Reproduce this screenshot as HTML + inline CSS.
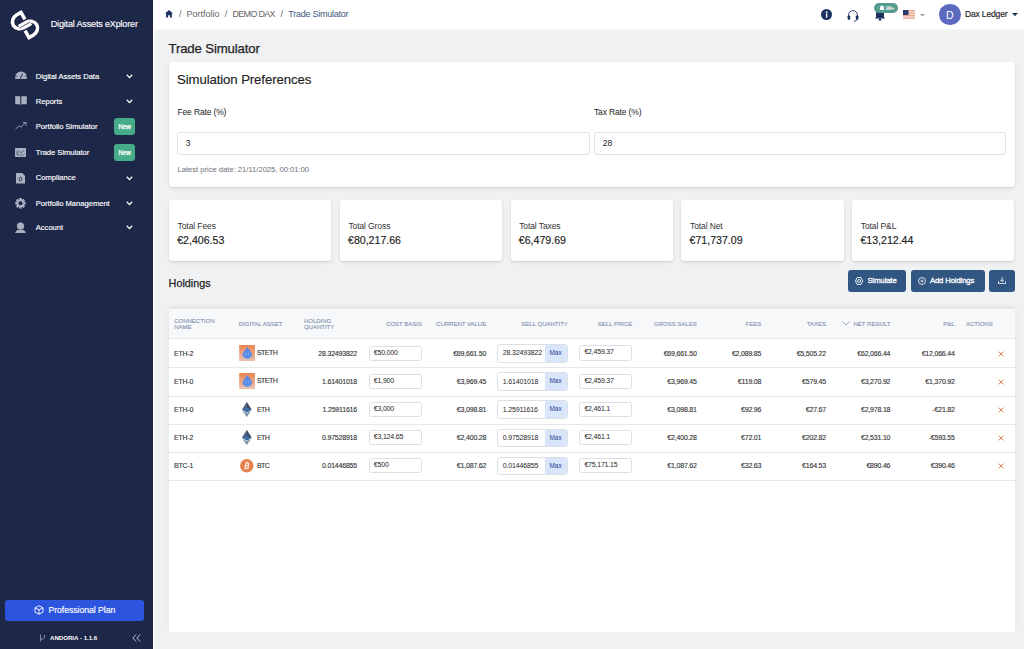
<!DOCTYPE html>
<html><head><meta charset="utf-8">
<style>
*{box-sizing:border-box;margin:0;padding:0}
html,body{width:1024px;height:649px;overflow:hidden}
body{font-family:"Liberation Sans",sans-serif;background:#f0f1f3;position:relative;color:#222}
.abs{position:absolute}
#side{position:absolute;left:0;top:0;width:153px;height:649px;background:#1d2747}
#sidestrip{position:absolute;left:153px;top:0;width:1.5px;height:649px;background:#fbfbfc}
#hdr{position:absolute;left:154px;top:0;width:870px;height:30px;background:#fff;border-bottom:1px solid #f8f8f9}
.nav{position:absolute;left:0;width:153px;height:20px;color:#fff;font-size:7.6px}
.nav .t{position:absolute;left:35.8px;top:0;white-space:nowrap;letter-spacing:-0.02px;-webkit-text-stroke:0.15px #fff}
.nav .ic{position:absolute;left:15px;top:3px;width:12px;height:10px}
.nav .chev{position:absolute;left:125.5px;top:2.4px;width:7px;height:5px}
.nav .badge{position:absolute;left:114.1px;top:-3.9px;width:21px;height:17px;background:#46ab88;border-radius:3px;color:#fff;font-size:6.3px;text-align:center;line-height:17px;-webkit-text-stroke:0.25px #fff;letter-spacing:-0.1px}
.card{position:absolute;background:#fff;border-radius:3px;box-shadow:0 1px 2px rgba(0,0,0,0.10),0 2px 5px rgba(0,0,0,0.05)}
.inp{position:absolute;background:#fff;border:1px solid #e0e2e6;border-radius:3px}
.stat .l{position:absolute;left:8.6px;top:20.6px;font-size:8.5px;color:#333;white-space:nowrap;letter-spacing:-0.1px}
.stat .v{position:absolute;left:8.2px;top:34.1px;font-size:10.6px;color:#222;white-space:nowrap;-webkit-text-stroke:0.15px #222}
.btn{position:absolute;background:#315681;border-radius:3px;color:#fff;font-weight:bold;font-size:7.4px;top:270px;height:22px}
.th{position:absolute;font-size:6px;color:#7f90ac;white-space:nowrap;line-height:6.2px;-webkit-text-stroke:0.1px #7f90ac}
.row{position:absolute;left:169px;width:846px;height:28.2px;border-bottom:1px solid #e6e8eb}
.c{position:absolute;font-size:7px;color:#333;white-space:nowrap;letter-spacing:-0.2px;-webkit-text-stroke:0.12px #333}
.r{text-align:right}
.ti{position:absolute;border:1px solid #dcdfe4;border-radius:2.5px;background:#fff;font-size:7px;line-height:12.6px;color:#262626;letter-spacing:-0.2px;white-space:nowrap}
.mx{position:absolute;border:1px solid #dcdfe4;border-radius:3px;background:#fff;font-size:7px;line-height:15.6px;overflow:hidden;color:#262626;white-space:nowrap;letter-spacing:-0.15px}
.mx .q{position:absolute;left:4px;top:0}
.mx .m{position:absolute;right:0;top:0;width:22.2px;height:16.6px;background:#d9e5fa;color:#243a96;text-align:center;font-size:6.4px;letter-spacing:0;line-height:16.2px}
.x{position:absolute;left:997px;top:11px;width:7px;height:7px}
</style></head><body>
<div id="side">
<svg class="abs" style="left:8px;top:8px" width="34" height="34" viewBox="-17 -17 34 34">
<g transform="rotate(-30)" fill="none" stroke="#fff" stroke-width="3.5">
<path d="M2.8,-5 L2.8,-12.9 L-2,-12.9 A8.3,7.35 0 0 0 -2,1.8 L6.2,1.8"/>
<path d="M-2.8,5 L-2.8,12.9 L2,12.9 A8.3,7.35 0 0 0 2,-1.8 L-6.2,-1.8"/>
<path d="M-6.5,0 L6.5,0" stroke="#1d2747" stroke-width="0.6"/>
</g></svg>
<div class="abs" style="left:50.7px;top:19.4px;color:#fff;font-size:9px;letter-spacing:-0.15px;white-space:nowrap;-webkit-text-stroke:0.15px #fff">Digital Assets eXplorer</div>
<div class="nav" style="top:71.66px"><svg class="ic" style="left:14.8px;top:-0.6px;height:8.4px;width:12.1px" viewBox="0 0 12 8.4"><path d="M0.2,8.2 L0.2,6.2 A5.8,5.8 0 0 1 11.8,6.2 L11.8,8.2 Z" fill="#a9b1c1"/><path d="M5.3,7.6 L7.6,2.6" stroke="#1d2747" stroke-width="1"/><path d="M0.6,5.2 L2.2,5.2 M9.8,5.2 L11.4,5.2" stroke="#1d2747" stroke-width="0.7"/></svg><span class="t">Digital Assets Data</span><svg class="chev" viewBox="0 0 7 5"><path d="M0.8,0.8 L3.5,3.6 L6.2,0.8" fill="none" stroke="#fff" stroke-width="1.3"/></svg></div>
<div class="nav" style="top:96.66px"><svg class="ic" style="left:14.9px;top:-0.8px;height:9.8px;width:12px" viewBox="0 0 12 9.8"><path d="M0.2,0.2 L5.2,0.2 L5.2,8.3 L0.2,8.3 Z M6.3,0.2 L11.8,0.2 L11.8,8.3 L6.3,8.3 Z" fill="#a9b1c1"/><path d="M5.2,8.3 L5.75,9.6 L6.3,8.3 Z" fill="#a9b1c1"/></svg><span class="t">Reports</span><svg class="chev" viewBox="0 0 7 5"><path d="M0.8,0.8 L3.5,3.6 L6.2,0.8" fill="none" stroke="#fff" stroke-width="1.3"/></svg></div>
<div class="nav" style="top:122.06px"><svg class="ic" style="left:14.9px;top:0.1px;height:7.5px;width:11.8px" viewBox="0 0 12 8"><path d="M0.3,7.6 L4,4 L6,5.6 L10.5,1.2" fill="none" stroke="#a9b1c1" stroke-width="0.9"/><path d="M8,0.6 L11.6,0.4 L11.4,4" fill="none" stroke="#a9b1c1" stroke-width="0.9"/></svg><span class="t">Portfolio Simulator</span><span class="badge">New</span></div>
<div class="nav" style="top:147.86px"><svg class="ic" style="left:15px;top:0.55px;height:8.9px;width:11px" viewBox="0 0 11 8.9"><rect x="0" y="0" width="11" height="8.9" rx="0.4" fill="#a9b1c1"/><path d="M2,2.5 L2,7 L9.3,7" fill="none" stroke="#4a5470" stroke-width="0.7"/><path d="M2.3,5.6 L4.2,3.3 L6,4.8 L8.8,2.6" fill="none" stroke="#4a5470" stroke-width="0.8"/></svg><span class="t">Trade Simulator</span><span class="badge">New</span></div>
<div class="nav" style="top:173.46px"><svg class="ic" style="left:15.9px;top:-0.1px;width:9.1px;height:10.5px" viewBox="0 0 9.1 10.5"><path d="M0,0 L6.3,0 L9.1,2.8 L9.1,10.5 L0,10.5 Z" fill="#a9b1c1"/><ellipse cx="4.5" cy="6" rx="1.4" ry="1.9" fill="none" stroke="#2a3350" stroke-width="0.9"/></svg><span class="t">Compliance</span><svg class="chev" viewBox="0 0 7 5"><path d="M0.8,0.8 L3.5,3.6 L6.2,0.8" fill="none" stroke="#fff" stroke-width="1.3"/></svg></div>
<div class="nav" style="top:198.56px"><svg class="ic" style="left:14.9px;top:-0.25px;width:11px;height:10.6px" viewBox="-5.5 -5.3 11 10.6"><circle r="4.1" fill="#a9b1c1"/><g fill="#a9b1c1"><rect x="-1.2" y="-5.3" width="2.4" height="10.6"/><rect x="-1.2" y="-5.3" width="2.4" height="10.6" transform="rotate(45)"/><rect x="-1.2" y="-5.3" width="2.4" height="10.6" transform="rotate(90)"/><rect x="-1.2" y="-5.3" width="2.4" height="10.6" transform="rotate(135)"/></g><circle r="2" fill="#1d2747"/></svg><span class="t">Portfolio Management</span><svg class="chev" viewBox="0 0 7 5"><path d="M0.8,0.8 L3.5,3.6 L6.2,0.8" fill="none" stroke="#fff" stroke-width="1.3"/></svg></div>
<div class="nav" style="top:223.06px"><svg class="ic" style="left:14.9px;top:-1.3px;width:11px;height:11.4px" viewBox="0 0 11 11.4"><circle cx="5.5" cy="4" r="3.6" fill="#a9b1c1"/><path d="M0,11.4 Q0.8,7.6 5.5,7.6 Q10.2,7.6 11,11.4 Z" fill="#a9b1c1"/></svg><span class="t">Account</span><svg class="chev" viewBox="0 0 7 5"><path d="M0.8,0.8 L3.5,3.6 L6.2,0.8" fill="none" stroke="#fff" stroke-width="1.3"/></svg></div>

<div class="abs" style="left:5px;top:600px;width:139px;height:21px;background:#2c54df;border-radius:3px"></div>
<svg class="abs" style="left:34px;top:605px" width="10" height="10" viewBox="0 0 10 10"><g fill="none" stroke="#fff" stroke-width="0.9"><path d="M5,0.8 L9,2.8 L9,7.2 L5,9.2 L1,7.2 L1,2.8 Z"/><path d="M1,2.8 L5,4.8 L9,2.8 M5,4.8 L5,9.2"/></g></svg>
<div class="abs" style="left:48.5px;top:605px;color:#fff;font-size:8.7px;white-space:nowrap;letter-spacing:-0.05px;-webkit-text-stroke:0.15px #fff">Professional Plan</div>
<svg class="abs" style="left:38.5px;top:634px" width="7" height="8" viewBox="0 0 7 8"><g fill="none" stroke="#8f98ab" stroke-width="0.9"><path d="M1.5,0.5 L1.5,7.5"/><path d="M5.5,1 L5.5,3 Q5.5,5 1.5,5.5"/></g></svg>
<div class="abs" style="left:50px;top:634px;color:#fff;font-size:6.1px;font-weight:bold;white-space:nowrap">ANDORIA - 1.1.6</div>
<svg class="abs" style="left:132px;top:633.5px" width="9" height="8" viewBox="0 0 9 8"><g fill="none" stroke="#cfd4de" stroke-width="0.9"><path d="M4.2,0.5 L0.8,4 L4.2,7.5"/><path d="M8.2,0.5 L4.8,4 L8.2,7.5"/></g></svg>
</div>
<div id="sidestrip"></div>
<div id="hdr"></div>
<svg class="abs" style="left:165px;top:10px" width="8" height="7.5" viewBox="0 0 8 7.5"><path d="M4,0 L8,3.6 L6.9,3.6 L6.9,7.5 L4.9,7.5 L4.9,5.2 L3.1,5.2 L3.1,7.5 L1.1,7.5 L1.1,3.6 L0,3.6 Z" fill="#1e3264"/></svg>
<div class="abs" style="left:179px;top:9px;font-size:9px;color:#666;white-space:nowrap">/</div>
<div class="abs" style="left:186.4px;top:9px;font-size:9px;color:#666;white-space:nowrap">Portfolio</div>
<div class="abs" style="left:224.8px;top:9px;font-size:9px;color:#666;white-space:nowrap">/</div>
<div class="abs" style="left:232.5px;top:9px;font-size:9px;color:#666;white-space:nowrap;letter-spacing:-0.7px">DEMO DAX</div>
<div class="abs" style="left:280.5px;top:9px;font-size:9px;color:#666;white-space:nowrap">/</div>
<div class="abs" style="left:288.3px;top:9px;font-size:9px;color:#3d5a80;white-space:nowrap;letter-spacing:-0.25px">Trade Simulator</div>

<div class="abs" style="left:821px;top:9px;width:11.3px;height:11.3px;border-radius:50%;background:#1e3264"></div>
<svg class="abs" style="left:821px;top:9px" width="11.3" height="11.3" viewBox="0 0 11.3 11.3"><circle cx="5.65" cy="3.2" r="0.85" fill="#fff"/><rect x="4.95" y="4.6" width="1.4" height="4" fill="#fff"/></svg>
<svg class="abs" style="left:847px;top:8.5px" width="12" height="13" viewBox="0 0 12 13"><path d="M1.6,8 L1.6,6 A4.4,4.4 0 0 1 10.4,6 L10.4,8" fill="none" stroke="#1e3264" stroke-width="0.9"/><rect x="0.6" y="6.5" width="2.6" height="4.2" rx="0.8" fill="#1e3264"/><rect x="8.8" y="6.5" width="2.6" height="4.2" rx="0.8" fill="#1e3264"/><path d="M10,10.5 Q9.5,12.3 7,12.3" fill="none" stroke="#1e3264" stroke-width="0.9"/></svg>
<svg class="abs" style="left:873.5px;top:9px" width="12" height="12" viewBox="0 0 12 12"><path d="M1,9.5 L2,8 L2,5 A4,4 0 0 1 10,5 L10,8 L11,9.5 Z" fill="#1e3264"/><circle cx="6" cy="10.5" r="1.3" fill="#1e3264"/></svg>
<div class="abs" style="left:874px;top:3.2px;width:24.2px;height:10px;border-radius:5px;background:#559b90"></div>
<svg class="abs" style="left:879px;top:5px" width="6" height="6.5" viewBox="0 0 6 6.5"><path d="M0.5,5 L1,4 L1,2.6 A2,2 0 0 1 5,2.6 L5,4 L5.5,5 Z" fill="#fff"/></svg>
<div class="abs" style="left:886px;top:4.6px;font-size:5px;font-weight:bold;color:#fff;white-space:nowrap">99+</div>
<svg class="abs" style="left:903px;top:10px" width="12" height="8.8" viewBox="0 0 12 8.8"><rect width="12" height="8.8" fill="#e9a489"/><g fill="#f6e3da"><rect y="1.25" width="12" height="1.25"/><rect y="3.75" width="12" height="1.25"/><rect y="6.25" width="12" height="1.25"/></g><rect width="5.5" height="5" fill="#2c3a73"/></svg>
<svg class="abs" style="left:919.5px;top:13.6px" width="5" height="2.6" viewBox="0 0 5 2.6"><path d="M0,0 L5,0 L2.5,2.6 Z" fill="#9a9ea6"/></svg>
<div class="abs" style="left:939px;top:4px;width:21.6px;height:21.4px;border-radius:50%;background:#5c6bc0"></div>
<div class="abs" style="left:946px;top:9px;font-size:10.5px;color:#fff;white-space:nowrap">D</div>
<div class="abs" style="left:965px;top:9.1px;font-size:8.6px;color:#222;white-space:nowrap;letter-spacing:-0.2px;-webkit-text-stroke:0.15px #222">Dax Ledger</div>
<svg class="abs" style="left:1012px;top:13px" width="6" height="3.2" viewBox="0 0 6 3.2"><path d="M0,0 L6,0 L3,3.2 Z" fill="#1e3264"/></svg>

<div class="abs" style="left:168.5px;top:41.3px;font-size:13.2px;color:#1f1f1f;white-space:nowrap;letter-spacing:-0.14px;-webkit-text-stroke:0.25px #1f1f1f">Trade Simulator</div>
<div class="card" style="left:169px;top:62.3px;width:846px;height:124.5px">
  <div class="abs" style="left:8px;top:9.6px;font-size:13.2px;color:#222;white-space:nowrap;letter-spacing:-0.1px;-webkit-text-stroke:0.15px #222">Simulation Preferences</div>
  <div class="abs" style="left:8.5px;top:44.8px;font-size:8.5px;color:#222;white-space:nowrap;letter-spacing:-0.15px">Fee Rate (%)</div>
  <div class="abs" style="left:425px;top:44.8px;font-size:8.5px;color:#222;white-space:nowrap;letter-spacing:-0.15px">Tax Rate (%)</div>
  <div class="inp" style="left:8px;top:69.7px;width:413px;height:22.6px"><span class="abs" style="left:7.7px;top:5px;font-size:8.5px;color:#222">3</span></div>
  <div class="inp" style="left:425px;top:69.7px;width:412px;height:22.6px"><span class="abs" style="left:7.7px;top:5px;font-size:8.5px;color:#222">28</span></div>
  <div class="abs" style="left:8.5px;top:102.6px;font-size:7.6px;color:#6b6f76;white-space:nowrap">Latest price date: 21/11/2025, 00:01:00</div>
</div>
<div class="card stat" style="left:169.0px;top:200.2px;width:162.2px;height:60.7px"><div class="l">Total Fees</div><div class="v">€2,406.53</div></div>\n<div class="card stat" style="left:339.8px;top:200.2px;width:162.2px;height:60.7px"><div class="l">Total Gross</div><div class="v">€80,217.66</div></div>\n<div class="card stat" style="left:510.6px;top:200.2px;width:162.2px;height:60.7px"><div class="l">Total Taxes</div><div class="v">€6,479.69</div></div>\n<div class="card stat" style="left:681.4px;top:200.2px;width:162.2px;height:60.7px"><div class="l">Total Net</div><div class="v">€71,737.09</div></div>\n<div class="card stat" style="left:852.2px;top:200.2px;width:162.2px;height:60.7px"><div class="l">Total P&amp;L</div><div class="v">€13,212.44</div></div>\n
<div class="abs" style="left:168.6px;top:276.6px;font-size:10.8px;color:#1f1f1f;white-space:nowrap;-webkit-text-stroke:0.25px #1f1f1f">Holdings</div>
<div class="btn" style="left:848px;width:58px"></div>
<div class="btn" style="left:911px;width:73.5px"></div>
<div class="btn" style="left:989px;width:25.7px"></div>
<svg class="abs" style="left:854.8px;top:276.8px" width="8.2" height="8" viewBox="0 0 8.2 8"><path d="M2.2,0.5 L6,0.5 L7.7,4 L6,7.5 L2.2,7.5 L0.5,4 Z" fill="none" stroke="#fff" stroke-width="0.9"/><circle cx="4.1" cy="4" r="1.5" fill="none" stroke="#fff" stroke-width="0.9"/></svg>
<div class="abs" style="left:867.6px;top:275.6px;font-size:7.7px;color:#fff;letter-spacing:-0.12px;-webkit-text-stroke:0.3px #fff;white-space:nowrap">Simulate</div>
<svg class="abs" style="left:917.5px;top:276.8px" width="8" height="8" viewBox="0 0 8 8"><circle cx="4" cy="4" r="3.5" fill="none" stroke="#fff" stroke-width="0.8"/><path d="M4,2.4 L4,5.6 M2.4,4 L5.6,4" stroke="#fff" stroke-width="0.75"/></svg>
<div class="abs" style="left:929.9px;top:275.6px;font-size:7.7px;color:#fff;letter-spacing:-0.12px;-webkit-text-stroke:0.3px #fff;white-space:nowrap">Add Holdings</div>
<svg class="abs" style="left:997.5px;top:276.8px" width="8.2" height="7.2" viewBox="0 0 8.2 7.2"><path d="M4.1,0.3 L4.1,4.4 M2.3,2.8 L4.1,4.6 L5.9,2.8" fill="none" stroke="#fff" stroke-width="0.9"/><path d="M0.5,4.2 L0.5,6.7 L7.7,6.7 L7.7,4.2" fill="none" stroke="#fff" stroke-width="0.9"/></svg>

<div class="abs" style="left:169px;top:309px;width:846px;height:322.7px;background:#fff;box-shadow:0 -2px 5px rgba(0,0,0,0.06)"></div><div class="abs" style="left:163px;top:632px;width:860px;height:17px;background:#f0f1f3"></div>
<div class="abs" style="left:169px;top:309px;width:846px;height:30px;background:#f7f8fa;border-bottom:1px solid #e3e6ea;border-radius:2px 2px 0 0"></div>
<div class="th" style="left:174.2px;top:317.7px">CONNECTION<br>NAME</div>
<div class="th" style="left:238.75px;top:320.9px">DIGITAL ASSET</div>
<div class="th" style="left:303.9px;top:317.7px">HOLDING<br>QUANTITY</div>
<div class="th" style="right:602px;text-align:right;top:320.9px">COST BASIS</div>
<div class="th" style="right:537.8px;text-align:right;top:320.9px">CURRENT VALUE</div>
<div class="th" style="right:456.20000000000005px;text-align:right;top:320.9px">SELL QUANTITY</div>
<div class="th" style="right:391.70000000000005px;text-align:right;top:320.9px">SELL PRICE</div>
<div class="th" style="right:327.29999999999995px;text-align:right;top:320.9px">GROSS SALES</div>
<div class="th" style="right:262.75px;text-align:right;top:320.9px">FEES</div>
<div class="th" style="right:198px;text-align:right;top:320.9px">TAXES</div>
<div class="th" style="right:133.70000000000005px;text-align:right;top:320.9px">NET RESULT</div>
<div class="th" style="right:69.29999999999995px;text-align:right;top:320.9px">P&amp;L</div>
<div class="th" style="left:966px;top:320.9px">ACTIONS</div>
<svg class="abs" style="left:842px;top:320.5px" width="8" height="5" viewBox="0 0 8 5"><path d="M0.6,0.6 L4,4 L7.4,0.6" fill="none" stroke="#8d9cb4" stroke-width="0.9"/></svg>
<div class="abs" style="left:169px;top:367.41px;width:846px;height:1px;background:#e6e8eb"></div>
<div class="c" style="left:174px;top:349.7px">ETH-2</div>
<svg class="abs" style="left:238.6px;top:345.1px" width="16.4" height="16" viewBox="0 0 16 16"><rect y="0" width="16" height="2.05" fill="#e88855"/><rect y="2" width="16" height="2.05" fill="#e98f61"/><rect y="4" width="16" height="2.05" fill="#e9976c"/><rect y="6" width="16" height="2.05" fill="#e99e78"/><rect y="8" width="16" height="2.05" fill="#eaa684"/><rect y="10" width="16" height="2.05" fill="#eaad90"/><rect y="12" width="16" height="2.05" fill="#eab59b"/><rect y="14" width="16" height="2.05" fill="#ebbca7"/><path d="M8.1,1.9 C9.4,4 12.8,7.3 12.8,9.7 A4.7,4.3 0 0 1 3.4,9.7 C3.4,7.3 6.8,4 8.1,1.9 Z" fill="#5a8be6"/><path d="M3.9,11.6 A4.4,2.6 0 0 0 12.3,11.6 L12,12.6 A4,1.6 0 0 1 4.2,12.6 Z" fill="#b9c9e6"/><circle cx="6.7" cy="9" r="0.5" fill="#dfe8f8"/><circle cx="9.5" cy="9" r="0.5" fill="#dfe8f8"/></svg><div class="c" style="left:257px;top:349.2px;letter-spacing:-0.55px">STETH</div>
<div class="c" style="right:667px;top:349.7px">28.32493822</div>
<div class="ti" style="left:368.5px;top:345.5px;width:53.5px;height:15.2px;padding-left:4.3px">€50,000</div>
<div class="c" style="right:537.8px;top:349.7px">€69,661.50</div>
<div class="mx" style="left:497.3px;top:344.1px;width:70.4px;height:18.6px"><span class="q" style="left:4.4px;top:0.4px">28.32493822</span><span class="m">Max</span></div>
<div class="ti" style="left:578.6px;top:345.4px;width:53.8px;height:15.2px;padding-left:4.8px;line-height:12.8px">€2,459.37</div>
<div class="c" style="right:327.29999999999995px;top:349.7px">€69,661.50</div>
<div class="c" style="right:262.75px;top:349.7px">€2,089.85</div>
<div class="c" style="right:198px;top:349.7px">€5,505.22</div>
<div class="c" style="right:133.70000000000005px;top:349.7px">€62,066.44</div>
<div class="c" style="right:69.29999999999995px;top:349.7px">€12,066.44</div>
<svg class="abs" style="left:997.9px;top:350.8px" width="6" height="6" viewBox="0 0 6 6"><path d="M0.5,0.5 L5.5,5.5 M5.5,0.5 L0.5,5.5" stroke="#e8845a" stroke-width="1"/></svg>
<div class="abs" style="left:169px;top:395.57px;width:846px;height:1px;background:#e6e8eb"></div>
<div class="c" style="left:174px;top:377.86px">ETH-0</div>
<svg class="abs" style="left:238.6px;top:373.26px" width="16.4" height="16" viewBox="0 0 16 16"><rect y="0" width="16" height="2.05" fill="#e88855"/><rect y="2" width="16" height="2.05" fill="#e98f61"/><rect y="4" width="16" height="2.05" fill="#e9976c"/><rect y="6" width="16" height="2.05" fill="#e99e78"/><rect y="8" width="16" height="2.05" fill="#eaa684"/><rect y="10" width="16" height="2.05" fill="#eaad90"/><rect y="12" width="16" height="2.05" fill="#eab59b"/><rect y="14" width="16" height="2.05" fill="#ebbca7"/><path d="M8.1,1.9 C9.4,4 12.8,7.3 12.8,9.7 A4.7,4.3 0 0 1 3.4,9.7 C3.4,7.3 6.8,4 8.1,1.9 Z" fill="#5a8be6"/><path d="M3.9,11.6 A4.4,2.6 0 0 0 12.3,11.6 L12,12.6 A4,1.6 0 0 1 4.2,12.6 Z" fill="#b9c9e6"/><circle cx="6.7" cy="9" r="0.5" fill="#dfe8f8"/><circle cx="9.5" cy="9" r="0.5" fill="#dfe8f8"/></svg><div class="c" style="left:257px;top:377.36px;letter-spacing:-0.55px">STETH</div>
<div class="c" style="right:667px;top:377.86px">1.61401018</div>
<div class="ti" style="left:368.5px;top:373.66px;width:53.5px;height:15.2px;padding-left:4.3px">€1,900</div>
<div class="c" style="right:537.8px;top:377.86px">€3,969.45</div>
<div class="mx" style="left:497.3px;top:372.26px;width:70.4px;height:18.6px"><span class="q" style="left:4.4px;top:0.4px">1.61401018</span><span class="m">Max</span></div>
<div class="ti" style="left:578.6px;top:373.56px;width:53.8px;height:15.2px;padding-left:4.8px;line-height:12.8px">€2,459.37</div>
<div class="c" style="right:327.29999999999995px;top:377.86px">€3,969.45</div>
<div class="c" style="right:262.75px;top:377.86px">€119.08</div>
<div class="c" style="right:198px;top:377.86px">€579.45</div>
<div class="c" style="right:133.70000000000005px;top:377.86px">€3,270.92</div>
<div class="c" style="right:69.29999999999995px;top:377.86px">€1,370.92</div>
<svg class="abs" style="left:997.9px;top:378.96px" width="6" height="6" viewBox="0 0 6 6"><path d="M0.5,0.5 L5.5,5.5 M5.5,0.5 L0.5,5.5" stroke="#e8845a" stroke-width="1"/></svg>
<div class="abs" style="left:169px;top:423.73px;width:846px;height:1px;background:#e6e8eb"></div>
<div class="c" style="left:174px;top:406.02px">ETH-0</div>
<svg class="abs" style="left:242px;top:401.72px" width="9.5" height="15" viewBox="0 0 9.5 15"><path d="M4.75,0 L9.5,7.6 L4.75,10.4 L0,7.6 Z" fill="#55657e"/><path d="M4.75,0 L9.5,7.6 L4.75,10.4 Z" fill="#414c60"/><path d="M4.75,5.6 L9.5,7.6 L4.75,10.4 L0,7.6 Z" fill="#3f6aa6"/><path d="M0,8.6 L4.75,11.4 L9.5,8.6 L4.75,15 Z" fill="#7d8ea8"/></svg><div class="c" style="left:257px;top:405.52px;letter-spacing:-0.55px">ETH</div>
<div class="c" style="right:667px;top:406.02px">1.25911616</div>
<div class="ti" style="left:368.5px;top:401.82px;width:53.5px;height:15.2px;padding-left:4.3px">€3,000</div>
<div class="c" style="right:537.8px;top:406.02px">€3,098.81</div>
<div class="mx" style="left:497.3px;top:400.42px;width:70.4px;height:18.6px"><span class="q" style="left:4.4px;top:0.4px">1.25911616</span><span class="m">Max</span></div>
<div class="ti" style="left:578.6px;top:401.72px;width:53.8px;height:15.2px;padding-left:4.8px;line-height:12.8px">€2,461.1</div>
<div class="c" style="right:327.29999999999995px;top:406.02px">€3,098.81</div>
<div class="c" style="right:262.75px;top:406.02px">€92.96</div>
<div class="c" style="right:198px;top:406.02px">€27.67</div>
<div class="c" style="right:133.70000000000005px;top:406.02px">€2,978.18</div>
<div class="c" style="right:69.29999999999995px;top:406.02px">-€21.82</div>
<svg class="abs" style="left:997.9px;top:407.12px" width="6" height="6" viewBox="0 0 6 6"><path d="M0.5,0.5 L5.5,5.5 M5.5,0.5 L0.5,5.5" stroke="#e8845a" stroke-width="1"/></svg>
<div class="abs" style="left:169px;top:451.89px;width:846px;height:1px;background:#e6e8eb"></div>
<div class="c" style="left:174px;top:434.18px">ETH-2</div>
<svg class="abs" style="left:242px;top:429.88px" width="9.5" height="15" viewBox="0 0 9.5 15"><path d="M4.75,0 L9.5,7.6 L4.75,10.4 L0,7.6 Z" fill="#55657e"/><path d="M4.75,0 L9.5,7.6 L4.75,10.4 Z" fill="#414c60"/><path d="M4.75,5.6 L9.5,7.6 L4.75,10.4 L0,7.6 Z" fill="#3f6aa6"/><path d="M0,8.6 L4.75,11.4 L9.5,8.6 L4.75,15 Z" fill="#7d8ea8"/></svg><div class="c" style="left:257px;top:433.68px;letter-spacing:-0.55px">ETH</div>
<div class="c" style="right:667px;top:434.18px">0.97528918</div>
<div class="ti" style="left:368.5px;top:429.98px;width:53.5px;height:15.2px;padding-left:4.3px">€3,124.65</div>
<div class="c" style="right:537.8px;top:434.18px">€2,400.28</div>
<div class="mx" style="left:497.3px;top:428.58px;width:70.4px;height:18.6px"><span class="q" style="left:4.4px;top:0.4px">0.97528918</span><span class="m">Max</span></div>
<div class="ti" style="left:578.6px;top:429.88px;width:53.8px;height:15.2px;padding-left:4.8px;line-height:12.8px">€2,461.1</div>
<div class="c" style="right:327.29999999999995px;top:434.18px">€2,400.28</div>
<div class="c" style="right:262.75px;top:434.18px">€72.01</div>
<div class="c" style="right:198px;top:434.18px">€202.82</div>
<div class="c" style="right:133.70000000000005px;top:434.18px">€2,531.10</div>
<div class="c" style="right:69.29999999999995px;top:434.18px">-€593.55</div>
<svg class="abs" style="left:997.9px;top:435.28px" width="6" height="6" viewBox="0 0 6 6"><path d="M0.5,0.5 L5.5,5.5 M5.5,0.5 L0.5,5.5" stroke="#e8845a" stroke-width="1"/></svg>
<div class="abs" style="left:169px;top:480.05px;width:846px;height:1px;background:#e6e8eb"></div>
<div class="c" style="left:174px;top:462.34px">BTC-1</div>
<svg class="abs" style="left:240px;top:459.14px" width="13.6" height="13.6" viewBox="0 0 13.6 13.6"><circle cx="6.8" cy="6.8" r="6.75" fill="#e5814f"/><g transform="rotate(14 6.8 6.8)"><path d="M4.9,3.6 L7.4,3.6 Q9,3.6 9,5 Q9,6.3 7.6,6.4 Q9.4,6.5 9.4,8 Q9.4,9.8 7.5,9.8 L4.9,9.8 Z M6.2,4.7 L6.2,6 L7.2,6 Q7.8,6 7.8,5.35 Q7.8,4.7 7.2,4.7 Z M6.2,7 L6.2,8.7 L7.4,8.7 Q8.1,8.7 8.1,7.85 Q8.1,7 7.4,7 Z" fill="#fbeee6" fill-rule="evenodd"/><path d="M5.8,2.6 L5.8,3.6 M7,2.6 L7,3.6 M5.8,9.8 L5.8,10.8 M7,9.8 L7,10.8" stroke="#fbeee6" stroke-width="0.7"/></g></svg><div class="c" style="left:257px;top:461.84px;letter-spacing:-0.55px">BTC</div>
<div class="c" style="right:667px;top:462.34px">0.01446855</div>
<div class="ti" style="left:368.5px;top:458.14px;width:53.5px;height:15.2px;padding-left:4.3px">€500</div>
<div class="c" style="right:537.8px;top:462.34px">€1,087.62</div>
<div class="mx" style="left:497.3px;top:456.74px;width:70.4px;height:18.6px"><span class="q" style="left:4.4px;top:0.4px">0.01446855</span><span class="m">Max</span></div>
<div class="ti" style="left:578.6px;top:458.04px;width:53.8px;height:15.2px;padding-left:4.8px;line-height:12.8px">€75,171.15</div>
<div class="c" style="right:327.29999999999995px;top:462.34px">€1,087.62</div>
<div class="c" style="right:262.75px;top:462.34px">€32.63</div>
<div class="c" style="right:198px;top:462.34px">€164.53</div>
<div class="c" style="right:133.70000000000005px;top:462.34px">€890.46</div>
<div class="c" style="right:69.29999999999995px;top:462.34px">€390.46</div>
<svg class="abs" style="left:997.9px;top:463.44px" width="6" height="6" viewBox="0 0 6 6"><path d="M0.5,0.5 L5.5,5.5 M5.5,0.5 L0.5,5.5" stroke="#e8845a" stroke-width="1"/></svg>
</body></html>
